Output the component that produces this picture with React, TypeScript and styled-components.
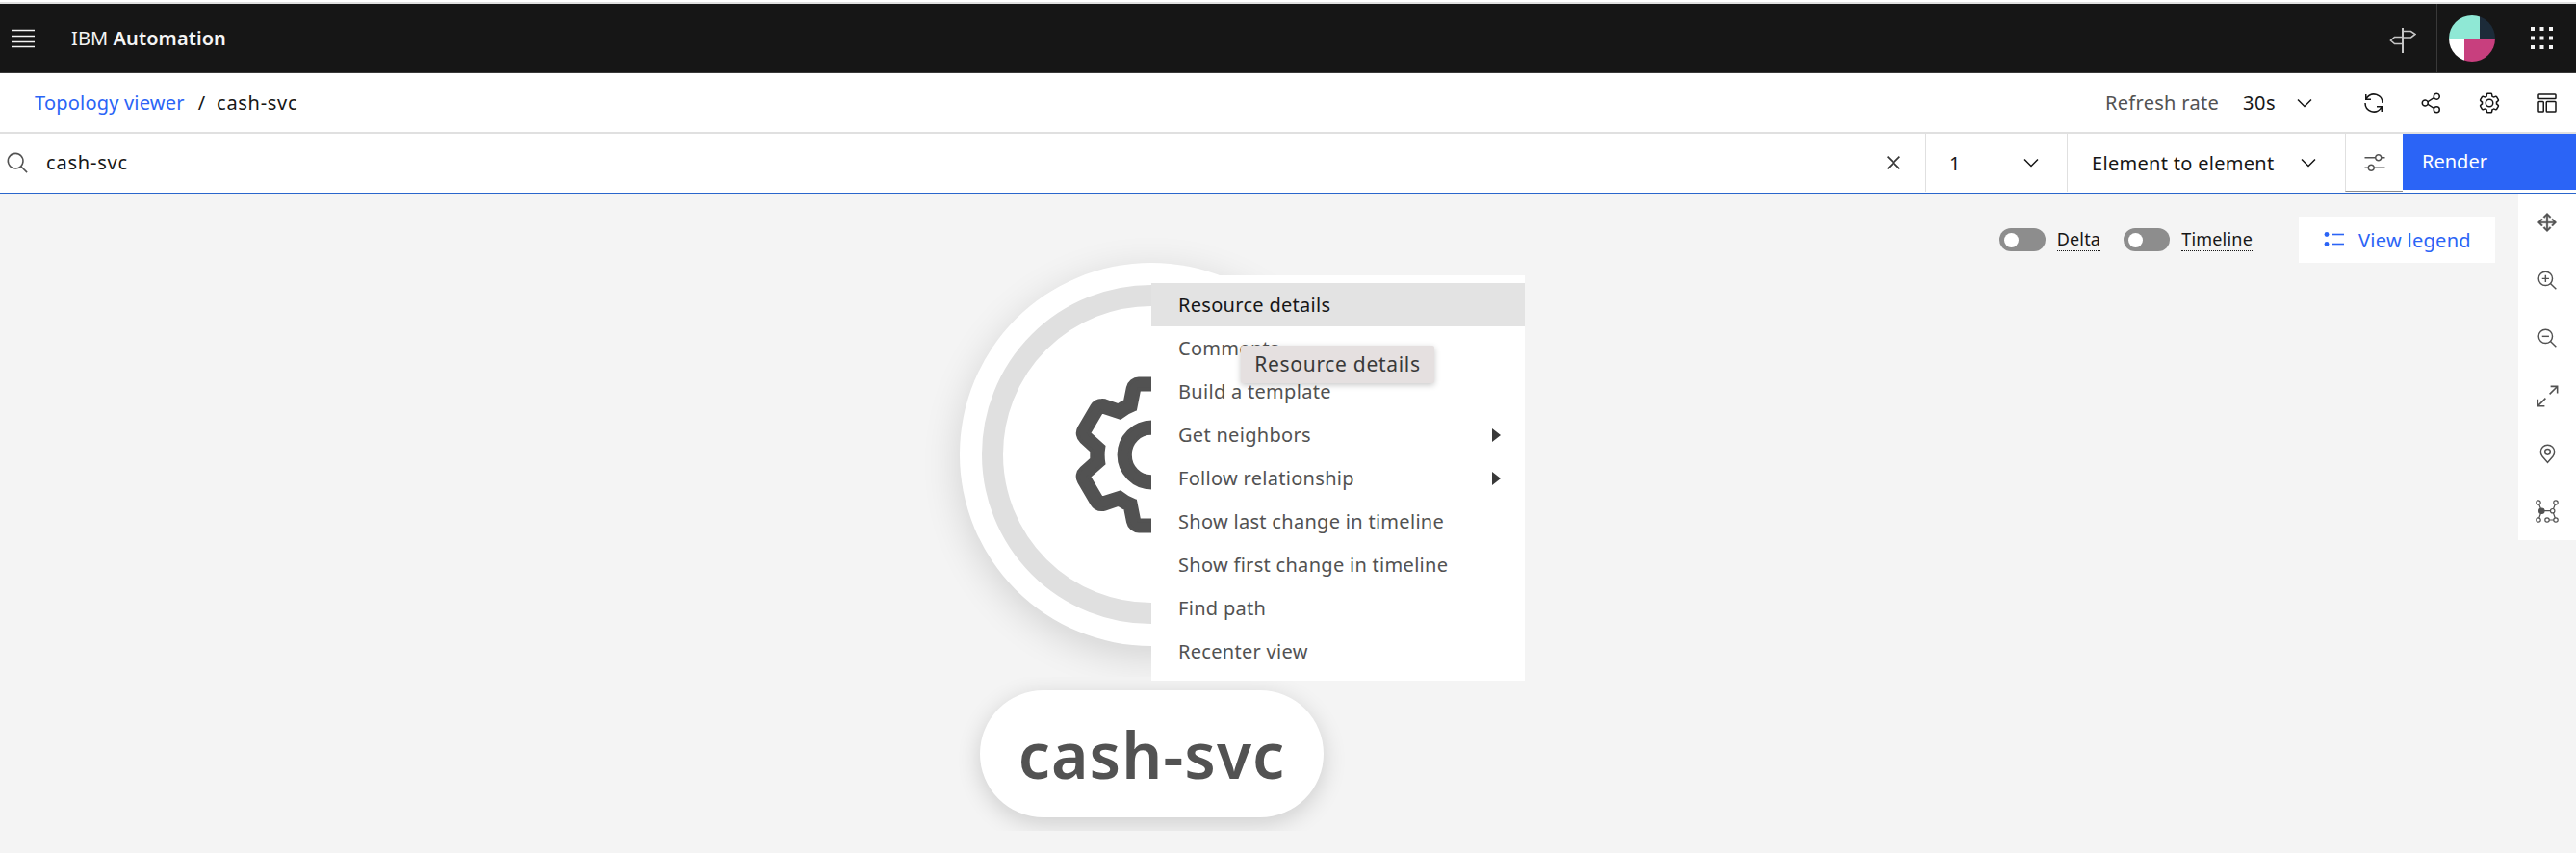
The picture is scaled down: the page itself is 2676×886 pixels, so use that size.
import styled, { createGlobalStyle } from "styled-components";

const GlobalStyle = createGlobalStyle`
  html, body {
    margin: 0;
    padding: 0;
    background: #f4f4f4;
  }
  * {
    box-sizing: border-box;
  }
  body {
    font-family: "Noto Sans", "Liberation Sans", sans-serif;
    color: #161616;
  }
`;

const GEAR =
  "M27,16.76c0-.25,0-.5,0-.76s0-.51,0-.77l1.92-1.68A2,2,0,0,0,29.3,11L26.94,7a2,2,0,0,0-1.73-1,2,2,0,0,0-.64.1l-2.43.82a11.35,11.35,0,0,0-1.31-.75l-.51-2.52a2,2,0,0,0-2-1.61H13.64a2,2,0,0,0-2,1.61l-.51,2.52a11.48,11.48,0,0,0-1.32.75L7.43,6.06A2,2,0,0,0,6.79,6,2,2,0,0,0,5.06,7L2.7,11a2,2,0,0,0,.41,2.51L5,15.24c0,.25,0,.5,0,.76s0,.51,0,.77L3.11,18.45A2,2,0,0,0,2.7,21L5.06,25a2,2,0,0,0,1.73,1,2,2,0,0,0,.64-.1l2.43-.82a11.35,11.35,0,0,0,1.31.75l.51,2.52a2,2,0,0,0,2,1.61h4.72a2,2,0,0,0,2-1.61l.51-2.52a11.48,11.48,0,0,0,1.32-.75l2.42.82a2,2,0,0,0,.64.1,2,2,0,0,0,1.73-1L29.3,21a2,2,0,0,0-.41-2.51ZM25.21,24l-3.43-1.16a8.86,8.86,0,0,1-2.71,1.57L18.36,28H13.64l-.71-3.55a9.36,9.36,0,0,1-2.7-1.57L6.79,24,4.43,20l2.72-2.4a8.9,8.9,0,0,1,0-3.13L4.43,12,6.79,8l3.43,1.16a8.86,8.86,0,0,1,2.71-1.57L13.64,4h4.72l.71,3.55a9.36,9.36,0,0,1,2.7,1.57L25.21,8,27.57,12l-2.72,2.4a8.9,8.9,0,0,1,0,3.13L27.57,20ZM16,22a6,6,0,1,1,6-6A5.94,5.94,0,0,1,16,22Zm0-10a3.91,3.91,0,0,0-4,4,3.91,3.91,0,0,0,4,4,3.91,3.91,0,0,0,4-4A3.91,3.91,0,0,0,16,12Z";

const MAGNIFIER =
  "M21.48 20.06A10.93 10.93 0 0 0 24 13 11 11 0 1 0 13 24a10.93 10.93 0 0 0 7.06-2.52L27.59 29 29 27.59ZM13 22a9 9 0 1 1 9-9 9 9 0 0 1-9 9Z";

const ICONS: Record<string, string[]> = {
  gear: [GEAR],
  renew: [
    "M12 10H6.78A11 11 0 0 1 27 16h2A13 13 0 0 0 6 7.68V4H4v8h8zM20 22h5.22A11 11 0 0 1 5 16H3a13 13 0 0 0 23 8.32V28h2v-8h-8z",
  ],
  share: [
    "M23,20a5,5,0,0,0-3.89,1.89L11.8,17.32a4.46,4.46,0,0,0,0-2.64l7.31-4.57A5,5,0,1,0,18,7a4.79,4.79,0,0,0,.2,1.32l-7.31,4.57a5,5,0,1,0,0,6.22l7.31,4.57A4.79,4.79,0,0,0,18,25a5,5,0,1,0,5-5ZM23,4a3,3,0,1,1-3,3A3,3,0,0,1,23,4ZM7,19a3,3,0,1,1,3-3A3,3,0,0,1,7,19Zm16,9a3,3,0,1,1,3-3A3,3,0,0,1,23,28Z",
  ],
  layout: [
    "M27 3H5a2 2 0 0 0-2 2v4a2 2 0 0 0 2 2h22a2 2 0 0 0 2-2V5a2 2 0 0 0-2-2Zm0 6H5V5h22Z",
    "M10 13H5a2 2 0 0 0-2 2v12a2 2 0 0 0 2 2h5a2 2 0 0 0 2-2V15a2 2 0 0 0-2-2Zm0 14H5V15h5Z",
    "M27 13H16a2 2 0 0 0-2 2v12a2 2 0 0 0 2 2h11a2 2 0 0 0 2-2V15a2 2 0 0 0-2-2Zm0 14H16V15h11Z",
  ],
  search: [
    "M29,27.5859l-7.5521-7.5521a11.0177,11.0177,0,1,0-1.4141,1.4141L27.5859,29ZM4,13a9,9,0,1,1,9,9A9.01,9.01,0,0,1,4,13Z",
  ],
  close: [
    "M24 9.4L22.6 8 16 14.6 9.4 8 8 9.4 14.6 16 8 22.6 9.4 24 16 17.4 22.6 24 24 22.6 17.4 16 24 9.4z",
  ],
  chevron: ["M16 22L6 12l1.4-1.4 8.6 8.6 8.6-8.6L26 12z"],
  sliders: [
    "M30,8h-4.1c-0.5-2.3-2.5-4-4.9-4s-4.4,1.7-4.9,4H2v2h14.1c0.5,2.3,2.5,4,4.9,4s4.4-1.7,4.9-4H30V8z M21,12c-1.7,0-3-1.3-3-3s1.3-3,3-3s3,1.3,3,3S22.7,12,21,12z",
    "M2,24h4.1c0.5,2.3,2.5,4,4.9,4s4.4-1.7,4.9-4H30v-2H15.9c-0.5-2.3-2.5-4-4.9-4s-4.4,1.7-4.9,4H2V24z M11,20c1.7,0,3,1.3,3,3s-1.3,3-3,3s-3-1.3-3-3S9.3,20,11,20z",
  ],
  move: [
    "M28 16l-5-5-1.41 1.41L24.17 15H17V7.83l2.59 2.58L21 9l-5-5-5 5 1.41 1.41L15 7.83V15H7.83l2.58-2.59L9 11l-5 5 5 5 1.41-1.41L7.83 17H15v7.17l-2.59-2.58L11 23l5 5 5-5-1.41-1.41L17 24.17V17h7.17l-2.58 2.59L23 21z",
  ],
  zoomIn: ["M18 12h-4V8h-2v4H8v2h4v4h2v-4h4v-2z", MAGNIFIER],
  zoomOut: ["M8 12h10v2H8z", MAGNIFIER],
  fit: [
    "M20 2v2h6.586L18 12.582 19.414 14 28 5.414V12h2V2H20z",
    "M14 19.416L12.592 18 4 26.586V20H2v10h10v-2H5.414L14 19.416z",
  ],
  pin: [
    "M16,18a5,5,0,1,1,5-5A5.0057,5.0057,0,0,1,16,18Zm0-8a3,3,0,1,0,3,3A3.0033,3.0033,0,0,0,16,10Z",
    "M16,30,7.5645,20.0513c-.0479-.0571-.3482-.4515-.3482-.4515A10.8888,10.8888,0,0,1,5,13a11,11,0,0,1,22,0,10.8844,10.8844,0,0,1-2.2148,6.5973l-.0015.0025s-.3.3944-.3447.4474ZM8.8125,18.395c.001.0007.2334.3082.2866.3744L16,26.9079l6.91-8.15c.0439-.0552.2783-.3649.2788-.3657A8.901,8.901,0,0,0,25,13,9,9,0,1,0,7,13a8.9054,8.9054,0,0,0,1.8125,5.395Z",
  ],
};

type IconProps = { name: string; size: number; color: string; weight?: number };

function Icon({ name, size, color, weight = 0 }: IconProps) {
  return (
    <svg
      width={size}
      height={size}
      viewBox="0 0 32 32"
      fill={color}
      stroke={weight ? color : "none"}
      strokeWidth={weight}
      aria-hidden="true"
    >
      {ICONS[name].map((d) => (
        <path key={d} d={d} />
      ))}
    </svg>
  );
}

function Hamburger() {
  return (
    <svg width="24" height="20" viewBox="0 0 24 20" stroke="#f4f4f4" strokeWidth="1.4">
      <path d="M0 1.5h24M0 7.5h24M0 13.5h24M0 18.5h24" />
    </svg>
  );
}

function Signpost() {
  return (
    <svg width="28" height="28" viewBox="0 0 28 28" fill="none" stroke="#c6c6c6" strokeWidth="1.6">
      <path d="M14 1v26" strokeWidth="2" />
      <path d="M14 4.5h8.5L27 7.5 22.5 11H14" />
      <path d="M14 10.5H5.5L1.5 14l4 3.5H14" />
    </svg>
  );
}

function Avatar() {
  return (
    <svg width="48" height="48" viewBox="0 0 48 48">
      <clipPath id="avatar-clip">
        <circle cx="24" cy="24" r="24" />
      </clipPath>
      <g clipPath="url(#avatar-clip)">
        <rect width="32" height="24" fill="#8fe8d5" />
        <rect x="32" width="16" height="24" fill="#1c2b39" />
        <rect y="24" width="16" height="24" fill="#ffffff" />
        <rect x="16" y="24" width="32" height="24" fill="#c83f7e" />
      </g>
    </svg>
  );
}

function AppSwitcher() {
  const spots = [0, 9.5, 19];
  return (
    <svg width="23" height="23" viewBox="0 0 23 23" fill="#f4f4f4">
      {spots.map((y) =>
        spots.map((x) => <rect key={`${x}-${y}`} x={x} y={y} width="4" height="4" />),
      )}
    </svg>
  );
}

function ListIcon() {
  return (
    <svg width="22" height="20" viewBox="0 0 22 20" fill="#2b64f6">
      <circle cx="3" cy="4.5" r="2.4" />
      <circle cx="3" cy="14.5" r="2.4" />
      <rect x="9" y="3.7" width="12" height="1.6" />
      <rect x="9" y="13.7" width="12" height="1.6" />
    </svg>
  );
}

function TopologyIcon() {
  const rings = [
    [3, 3],
    [21, 3],
    [17.7, 11.7],
    [3, 21],
    [12, 21],
    [21, 21],
  ];
  return (
    <svg width="24" height="24" viewBox="0 0 24 24" fill="none" stroke="#525252" strokeWidth="1.2">
      <path d="M3 3l3.3 8.7L3 21M6.3 11.7h11.4L21 3M17.7 11.7L21 21H12" />
      {rings.map(([cx, cy]) => (
        <circle key={`${cx}-${cy}`} cx={cx} cy={cy} r="2.2" fill="#fff" />
      ))}
      <circle cx="6.3" cy="11.7" r="2.7" fill="#525252" />
    </svg>
  );
}

const MENU_ITEMS = [
  { label: "Resource details", active: true },
  { label: "Comments" },
  { label: "Build a template" },
  { label: "Get neighbors", submenu: true },
  { label: "Follow relationship", submenu: true },
  { label: "Show last change in timeline" },
  { label: "Show first change in timeline" },
  { label: "Find path" },
  { label: "Recenter view" },
];

const TOOLBAR_ICONS = ["renew", "share", "gear", "layout"];
const RAIL_ICONS = [
  { name: "move", size: 26, weight: 0.5 },
  { name: "zoomIn", size: 23 },
  { name: "zoomOut", size: 23 },
  { name: "fit", size: 25 },
  { name: "pin", size: 23 },
];

function App() {
  return (
    <Page>
      <GlobalStyle />
      <Masthead>
        <MenuButton>
          <Hamburger />
        </MenuButton>
        <Product>
          IBM <strong>Automation</strong>
        </Product>
        <MastheadActions>
          <SignpostSlot>
            <Signpost />
          </SignpostSlot>
          <AvatarSlot>
            <Avatar />
          </AvatarSlot>
          <SwitcherSlot>
            <AppSwitcher />
          </SwitcherSlot>
        </MastheadActions>
      </Masthead>

      <CrumbBar>
        <CrumbLink>Topology viewer</CrumbLink>
        <CrumbSlash>/</CrumbSlash>
        <CrumbCurrent>cash-svc</CrumbCurrent>
        <RefreshGroup>
          <RefreshLabel>Refresh rate</RefreshLabel>
          <RefreshValue>30s</RefreshValue>
          <Icon name="chevron" size={24} color="#161616" />
        </RefreshGroup>
        <ToolIcons>
          {TOOLBAR_ICONS.map((name) => (
            <ToolIcon key={name}>
              <Icon name={name} size={24} color="#161616" />
            </ToolIcon>
          ))}
        </ToolIcons>
      </CrumbBar>

      <SearchBar>
        <SearchIconSlot>
          <Icon name="search" size={25} color="#525252" />
        </SearchIconSlot>
        <SearchText>cash-svc</SearchText>
        <ClearSlot>
          <Icon name="close" size={28} color="#393939" />
        </ClearSlot>
        <HopSelect>
          <span>1</span>
          <Icon name="chevron" size={24} color="#161616" />
        </HopSelect>
        <TypeSelect>
          <span>Element to element</span>
          <Icon name="chevron" size={24} color="#161616" />
        </TypeSelect>
        <FilterButton>
          <Icon name="sliders" size={24} color="#525252" />
        </FilterButton>
        <RenderButton>Render</RenderButton>
      </SearchBar>

      <Canvas>
        <CanvasControls>
          <ToggleGroup>
            <Toggle />
            <ToggleLabel>Delta</ToggleLabel>
          </ToggleGroup>
          <ToggleGroup>
            <Toggle />
            <ToggleLabel>Timeline</ToggleLabel>
          </ToggleGroup>
          <LegendButton>
            <ListIcon />
            View legend
          </LegendButton>
        </CanvasControls>

        <NodeCircle>
          <NodeRing>
            <Icon name="gear" size={181} color="#525252" weight={0.7} />
          </NodeRing>
        </NodeCircle>
        <NodeLabel>cash-svc</NodeLabel>

        <ContextMenu>
          {MENU_ITEMS.map((item) => (
            <MenuRow key={item.label} $active={item.active}>
              {item.label}
              {item.submenu && <SubmenuArrow />}
            </MenuRow>
          ))}
        </ContextMenu>
        <MenuTooltip>Resource details</MenuTooltip>

        <ToolRail>
          {RAIL_ICONS.map(({ name, size, weight }) => (
            <RailSlot key={name}>
              <Icon name={name} size={size} color="#525252" weight={weight} />
            </RailSlot>
          ))}
          <RailSlot>
            <TopologyIcon />
          </RailSlot>
        </ToolRail>
      </Canvas>
    </Page>
  );
}

const Page = styled.div`
  display: flex;
  flex-direction: column;
  width: 2676px;
  height: 886px;
  overflow: hidden;
  padding-top: 2px;
  background: #fff;
`;

const Masthead = styled.header`
  display: flex;
  align-items: center;
  height: 74px;
  border-top: 2px solid #e0e0e0;
  border-bottom: 1px solid #393939;
  background: #161616;
  color: #f4f4f4;
`;

const MenuButton = styled.div`
  display: flex;
  width: 74px;
  padding-left: 12px;
`;

const Product = styled.div`
  font-size: 20px;
  letter-spacing: 0.1px;

  strong {
    font-weight: 600;
  }
`;

const MastheadActions = styled.div`
  display: flex;
  align-items: center;
  align-self: stretch;
  margin-left: auto;
`;

const SignpostSlot = styled.div`
  display: flex;
  justify-content: center;
  align-items: center;
  width: 72px;
  height: 100%;
  padding-top: 5px;
  border-right: 1px solid #393939;
`;

const AvatarSlot = styled.div`
  display: flex;
  justify-content: center;
  width: 72px;
`;

const SwitcherSlot = styled.div`
  display: flex;
  justify-content: center;
  width: 72px;
`;

const CrumbBar = styled.nav`
  display: flex;
  align-items: center;
  height: 63px;
  padding-left: 36px;
  border-bottom: 2px solid #e0e0e0;
  background: #fff;
  font-size: 20px;
`;

const CrumbLink = styled.span`
  color: #2b64f6;
  letter-spacing: 0.2px;
`;

const CrumbSlash = styled.span`
  margin: 0 12px 0 14px;
`;

const CrumbCurrent = styled.span`
  color: #161616;
  letter-spacing: 0.7px;
`;

const RefreshGroup = styled.div`
  display: flex;
  align-items: center;
  margin-left: auto;
`;

const RefreshLabel = styled.span`
  color: #525252;
  letter-spacing: 0.3px;
`;

const RefreshValue = styled.span`
  margin: 0 18px 0 25px;
  letter-spacing: 0.5px;
`;

const ToolIcons = styled.div`
  display: flex;
  margin-left: 30px;
`;

const ToolIcon = styled.div`
  display: flex;
  justify-content: center;
  width: 60px;
`;

const SearchBar = styled.div`
  display: flex;
  align-items: flex-start;
  height: 63px;
  border-bottom: 2px solid #2a66cc;
  background: #fff;
  font-size: 20px;
`;

const SearchIconSlot = styled.div`
  display: flex;
  align-items: center;
  height: 60px;
  padding-left: 6px;
  width: 48px;
`;

const SearchText = styled.div`
  flex: 1;
  letter-spacing: 0.8px;
  line-height: 60px;
`;

const ClearSlot = styled.div`
  display: flex;
  align-items: center;
  height: 60px;
  padding-right: 19px;
`;

const HopSelect = styled.div`
  display: flex;
  align-items: center;
  justify-content: space-between;
  width: 147px;
  height: 60px;
  padding: 0 25px 0 24px;
  border-left: 1px solid #e0e0e0;
`;

const TypeSelect = styled(HopSelect)`
  width: 289px;
  padding: 0 26px 0 25px;
  letter-spacing: 0.3px;
`;

const FilterButton = styled.div`
  display: flex;
  justify-content: center;
  align-items: center;
  width: 60px;
  height: 60px;
  border-left: 1px solid #e0e0e0;
  border-bottom: 1px solid #8d8d8d;
`;

const RenderButton = styled.div`
  width: 180px;
  height: 58px;
  padding-left: 20px;
  background: #2b64f6;
  color: #fff;
  line-height: 58px;
`;

const Canvas = styled.main`
  position: relative;
  flex: 1;
  background: #f4f4f4;
`;

const CanvasControls = styled.div`
  display: flex;
  justify-content: flex-end;
  align-items: center;
  padding: 23px 84px 0 0;
`;

const ToggleGroup = styled.div`
  display: flex;
  align-items: center;
  gap: 12px;
  margin-right: 24px;
`;

const Toggle = styled.span`
  position: relative;
  width: 48px;
  height: 24px;
  border-radius: 12px;
  background: #8d8d8d;

  &::after {
    content: "";
    position: absolute;
    top: 5px;
    left: 5px;
    width: 15px;
    height: 15px;
    border-radius: 50%;
    background: #fff;
  }
`;

const ToggleLabel = styled.span`
  margin-bottom: 1px;
  border-bottom: 1px dotted #161616;
  font-size: 18px;
  letter-spacing: 0.2px;
  line-height: 24px;
`;

const LegendButton = styled.div`
  display: flex;
  align-items: center;
  gap: 14px;
  width: 204px;
  height: 48px;
  margin-left: 24px;
  padding-left: 26px;
  background: #fff;
  color: #2b64f6;
  font-size: 20px;
  letter-spacing: 0.3px;
`;

const NodeCircle = styled.div`
  position: absolute;
  left: 997px;
  top: 71px;
  display: flex;
  justify-content: center;
  align-items: center;
  width: 398px;
  height: 398px;
  border-radius: 50%;
  background: #fff;
  box-shadow: 0 10px 40px rgba(0, 0, 0, 0.14);
  clip-path: inset(-70px -70px -32px -70px);
`;

const NodeRing = styled.div`
  display: flex;
  justify-content: center;
  align-items: center;
  width: 352px;
  height: 352px;
  border: 22px solid #e0e0e0;
  border-radius: 50%;
`;

const NodeLabel = styled.div`
  position: absolute;
  left: 1018px;
  top: 515px;
  width: 357px;
  height: 132px;
  border-radius: 66px;
  background: #fff;
  box-shadow: 0 6px 24px rgba(0, 0, 0, 0.16);
  clip-path: inset(-14px -28px);
  color: #525252;
  font-size: 66px;
  font-weight: 600;
  letter-spacing: 1px;
  line-height: 132px;
  text-align: center;
`;

const ContextMenu = styled.div`
  position: absolute;
  left: 1196px;
  top: 84px;
  width: 388px;
  padding: 8px 0;
  background: #fff;
`;

const MenuRow = styled.div<{ $active?: boolean }>`
  display: flex;
  align-items: center;
  justify-content: space-between;
  height: 45px;
  padding: 0 25px 0 28px;
  background: ${({ $active }) => ($active ? "#e3e3e3" : "transparent")};
  color: ${({ $active }) => ($active ? "#161616" : "#525252")};
  font-size: 20px;
  letter-spacing: 0.3px;
`;

const SubmenuArrow = styled.span`
  width: 0;
  height: 0;
  border-top: 7px solid transparent;
  border-bottom: 7px solid transparent;
  border-left: 9px solid #393939;
`;

const MenuTooltip = styled.div`
  position: absolute;
  left: 1289px;
  top: 157px;
  width: 201px;
  height: 39px;
  border-radius: 2px;
  background: #e5e0e0;
  box-shadow: 0 2px 6px rgba(0, 0, 0, 0.22);
  color: #393939;
  font-size: 21px;
  letter-spacing: 0.7px;
  line-height: 39px;
  text-align: center;
`;

const ToolRail = styled.aside`
  position: absolute;
  top: -1px;
  right: 0;
  display: flex;
  flex-direction: column;
  width: 60px;
  background: #fff;
`;

const RailSlot = styled.div`
  display: flex;
  justify-content: center;
  align-items: center;
  height: 60px;
`;

export default App;
